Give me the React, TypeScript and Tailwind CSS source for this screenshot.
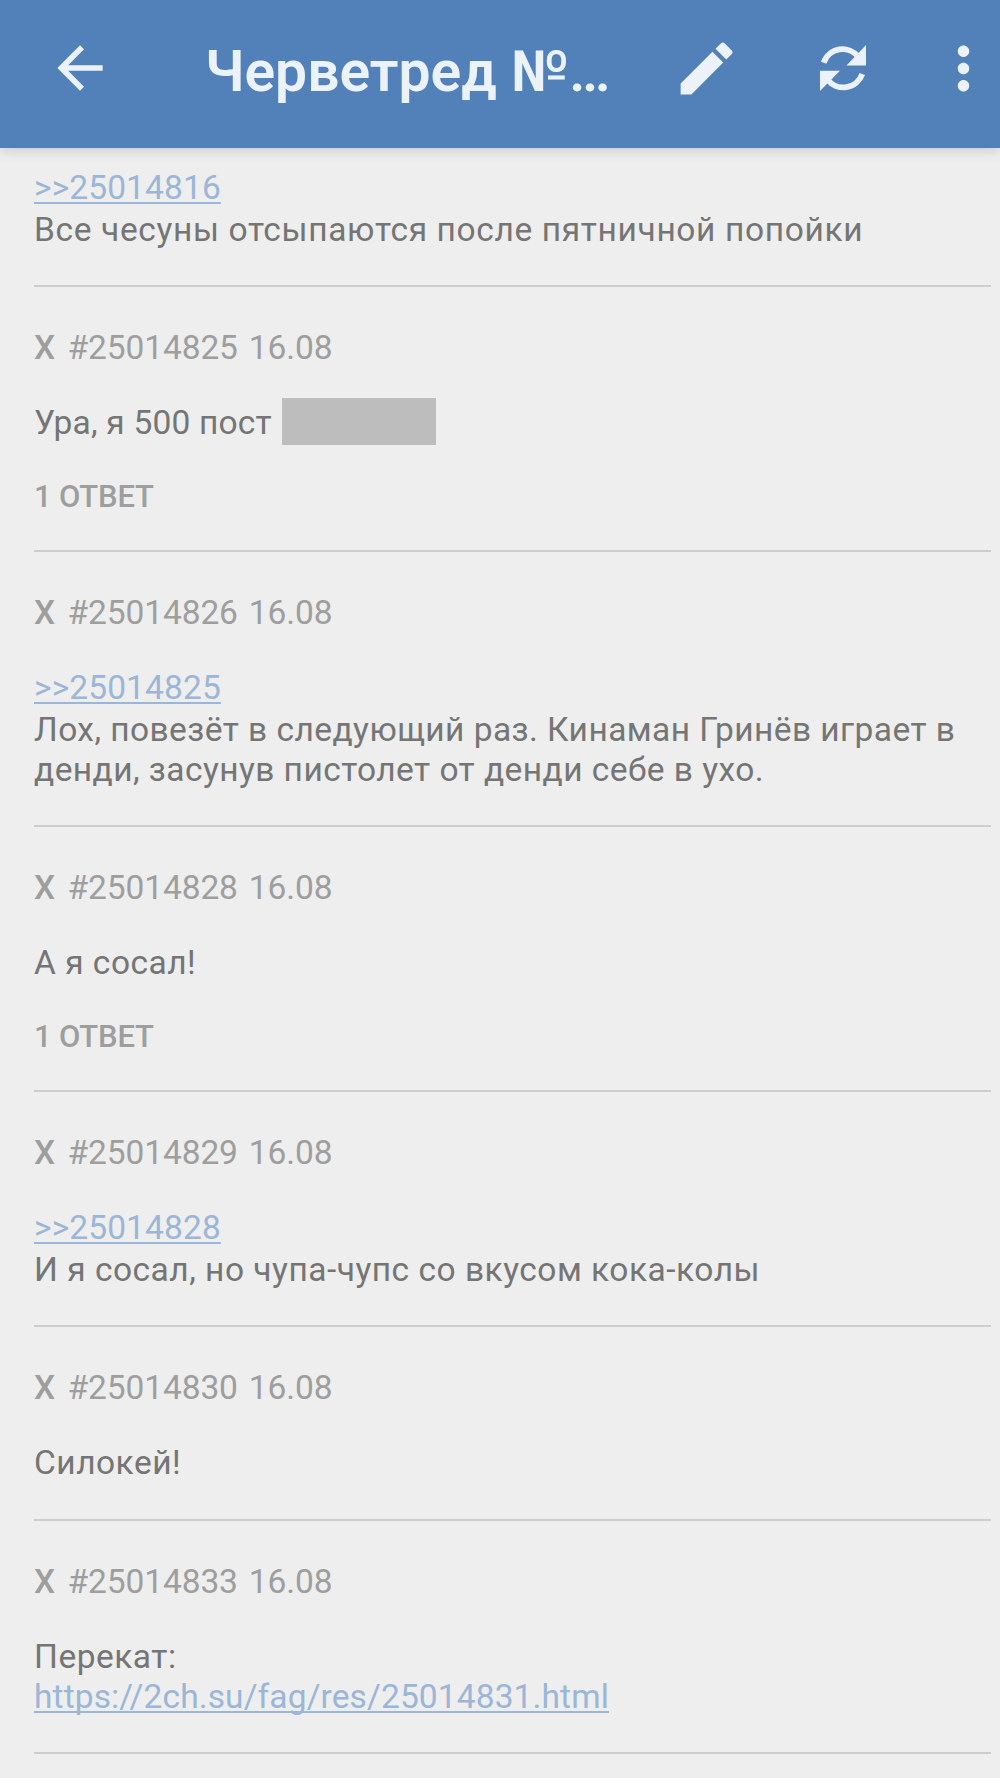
import type { ReactNode } from "react";

type Post = {
  id: string;
  body: ReactNode;
  replies?: string;
};

function PostLink({ children }: { children: ReactNode }) {
  return (
    <a
      href="#"
      className="tracking-[0.12px] text-[#9bb6d6] underline decoration-2 underline-offset-[3px] [text-decoration-skip-ink:none]"
    >
      {children}
    </a>
  );
}

const posts: Post[] = [
  {
    id: "25014825",
    body: (
      <p className="flex h-10 tracking-[0.2px]">
        Ура, я 500 пост
        <span className="-mt-[5px] ml-[10px] h-[47px] w-[154px] bg-[#bdbdbd]" />
      </p>
    ),
    replies: "1 ОТВЕТ",
  },
  {
    id: "25014826",
    body: (
      <>
        <p className="h-[41.5px]">
          <PostLink>&gt;&gt;25014825</PostLink>
        </p>
        <p className="tracking-[0.44px] whitespace-nowrap">
          Лох, повезёт в следующий раз. Кинаман Гринёв играет в
          <br />
          денди, засунув пистолет от денди себе в ухо.
        </p>
      </>
    ),
  },
  { id: "25014828", body: <p>А я сосал!</p>, replies: "1 ОТВЕТ" },
  {
    id: "25014829",
    body: (
      <>
        <p className="h-[41.5px]">
          <PostLink>&gt;&gt;25014828</PostLink>
        </p>
        <p>И я сосал, но чупа-чупс со вкусом кока-колы</p>
      </>
    ),
  },
  { id: "25014830", body: <p>Силокей!</p> },
  {
    id: "25014833",
    body: (
      <>
        <p>Перекат:</p>
        <p>
          <PostLink>https://2ch.su/fag/res/25014831.html</PostLink>
        </p>
      </>
    ),
  },
];

function Toolbar() {
  return (
    <header className="relative z-10 flex h-[148px] items-start bg-[#5181b8] text-[#ebf2fa] shadow-[0_2px_12px_rgba(0,0,0,0.16)]">
      <svg className="mt-[34px] ml-[46px] size-[68px]" viewBox="0 0 24 24" fill="currentColor">
        <path d="M20 11H7.83l5.59-5.59L12 4l-8 8 8 8 1.41-1.41L7.83 13H20v-2z" />
      </svg>
      <h1 className="mt-[38px] ml-[91px] w-[422px] text-[57px] leading-[68px] font-semibold whitespace-nowrap">
        Черветред №…
      </h1>
      <svg className="mt-[34px] ml-[45px] size-[69px]" viewBox="0 0 24 24" fill="currentColor">
        <path d="M3 17.25V21h3.75L17.81 9.94l-3.75-3.75L3 17.25zM20.71 7.04a.996.996 0 0 0 0-1.41l-2.34-2.34a.996.996 0 0 0-1.41 0l-1.83 1.83 3.75 3.75 1.83-1.83z" />
      </svg>
      <svg className="mt-[45px] ml-[79px] h-[46px] w-[46px]" viewBox="0 0 46 46">
        <path
          d="M3.7 17.7A20 20 0 0 1 38.5 12M42.3 29A20 20 0 0 1 7.5 34.5"
          fill="none"
          stroke="currentColor"
          strokeWidth="5.8"
        />
        <path d="M46 0V20.5H26.5zM0 46V25.7H20z" fill="currentColor" />
      </svg>
      <svg className="mt-[34px] ml-[62.5px] size-[69px]" viewBox="0 0 24 24" fill="currentColor">
        <path d="M12 8c1.1 0 2-.9 2-2s-.9-2-2-2-2 .9-2 2 .9 2 2 2zm0 2c-1.1 0-2 .9-2 2s.9 2 2 2 2-.9 2-2-.9-2-2-2zm0 6c-1.1 0-2 .9-2 2s.9 2 2 2 2-.9 2-2-.9-2-2-2z" />
      </svg>
    </header>
  );
}

function PostItem({ post }: { post: Post }) {
  return (
    <article className="border-b-2 border-[#cdcdcd] pt-[41.2px] pb-[35.4px]">
      <div className="mb-[35px] flex h-10 tracking-[-0.1px] text-[#9e9e9e]">
        <span className="w-[33.5px] font-medium">X</span>
        <span>#{post.id}</span>
        <span className="ml-[11px]">16.08</span>
      </div>
      <div>{post.body}</div>
      {post.replies && (
        <p className="mt-[34px] -mb-[2.6px] h-10 text-[31px] font-medium tracking-[-0.2px] text-[#9e9e9e]">
          {post.replies}
        </p>
      )}
    </article>
  );
}

export default function App() {
  return (
    <div className="h-[1778px] w-[1000px] overflow-hidden bg-[#eeeeee] font-[Roboto,sans-serif]">
      <Toolbar />
      <main className="mr-[9px] ml-[34px] text-[33.5px] leading-10 tracking-[0.5px] text-[#757575]">
        <article className="border-b-2 border-[#cdcdcd] pt-5 pb-[35.5px]">
          <p className="h-[41.5px]">
            <PostLink>&gt;&gt;25014816</PostLink>
          </p>
          <p className="tracking-[0.64px]">Все чесуны отсыпаются после пятничной попойки</p>
        </article>
        {posts.map((post) => (
          <PostItem key={post.id} post={post} />
        ))}
      </main>
    </div>
  );
}
